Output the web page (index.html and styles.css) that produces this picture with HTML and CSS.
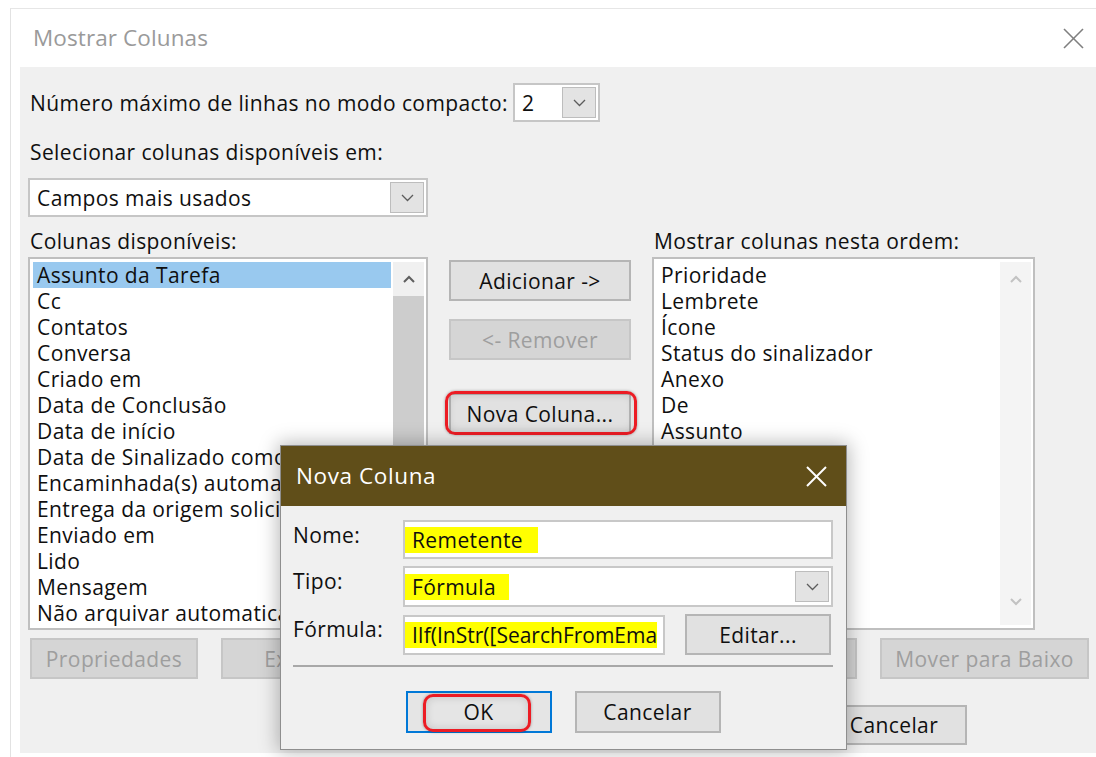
FILE: index.html
```html
<!DOCTYPE html>
<html lang="pt-BR">
<head>
<meta charset="utf-8">
<title>Mostrar Colunas</title>
<link rel="stylesheet" href="styles.css">
</head>
<body>
<div class="window">
  <header class="titlebar">
    <span class="title">Mostrar Colunas</span>
    <svg class="close-icon" width="21" height="21" viewBox="0 0 21 21" aria-hidden="true">
      <line x1="1" y1="1" x2="20" y2="20"/><line x1="20" y1="1" x2="1" y2="20"/>
    </svg>
  </header>

  <main class="panel">
    <div class="row-compact">
      <span class="text">Número máximo de linhas no modo compacto:</span>
      <div class="combo combo-small">
        <span class="combo-value">2</span>
        <span class="drop"><svg width="13" height="8" viewBox="0 0 13 8"><polyline points="1,1 6.5,6.5 12,1"/></svg></span>
      </div>
    </div>

    <div class="text label-select">Selecionar colunas disponíveis em:</div>
    <div class="combo combo-wide">
      <span class="combo-value">Campos mais usados</span>
      <span class="drop"><svg width="13" height="8" viewBox="0 0 13 8"><polyline points="1,1 6.5,6.5 12,1"/></svg></span>
    </div>

    <div class="columns">
      <section class="col">
        <div class="text col-label">Colunas disponíveis:</div>
        <div class="listbox">
          <ul class="items">
            <li class="selected">Assunto da Tarefa</li>
            <li>Cc</li>
            <li>Contatos</li>
            <li>Conversa</li>
            <li>Criado em</li>
            <li>Data de Conclusão</li>
            <li>Data de início</li>
            <li>Data de Sinalizado como</li>
            <li>Encaminhada(s) automaticamente</li>
            <li>Entrega da origem solicitada</li>
            <li>Enviado em</li>
            <li>Lido</li>
            <li>Mensagem</li>
            <li>Não arquivar automaticamente</li>
          </ul>
          <div class="scrollbar">
            <span class="arrow dark"><svg width="12" height="8" viewBox="0 0 12 8"><polyline points="1,7 6,2 11,7"/></svg></span>
            <span class="thumb"></span>
          </div>
        </div>
      </section>

      <section class="col-mid">
        <button class="btn">Adicionar -&gt;</button>
        <button class="btn disabled btn-remove">&lt;- Remover</button>
        <div class="marked btn-new-wrap">
          <button class="btn">Nova Coluna...</button>
          <span class="ring ring-new"></span>
        </div>
      </section>

      <section class="col">
        <div class="text col-label">Mostrar colunas nesta ordem:</div>
        <div class="listbox listbox-right">
          <ul class="items">
            <li>Prioridade</li>
            <li>Lembrete</li>
            <li>Ícone</li>
            <li>Status do sinalizador</li>
            <li>Anexo</li>
            <li>De</li>
            <li>Assunto</li>
            <li>Recebido</li>
            <li>Tamanho</li>
            <li>Categorias</li>
            <li>Menções</li>
          </ul>
          <div class="scrollbar scrollbar-idle">
            <span class="arrow"><svg width="12" height="8" viewBox="0 0 12 8"><polyline points="1,7 6,2 11,7"/></svg></span>
            <span class="arrow"><svg width="12" height="8" viewBox="0 0 12 8"><polyline points="1,1 6,6 11,1"/></svg></span>
          </div>
        </div>
      </section>
    </div>

    <div class="row-actions">
      <button class="btn disabled btn-props">Propriedades</button>
      <button class="btn disabled btn-delete">Excluir</button>
      <button class="btn disabled btn-up">Mover para Cima</button>
      <button class="btn disabled btn-down">Mover para Baixo</button>
    </div>

    <div class="row-footer">
      <button class="btn btn-footer">OK</button>
      <button class="btn btn-footer">Cancelar</button>
    </div>
  </main>

  <div class="dialog">
    <div class="dialog-titlebar">
      <span>Nova Coluna</span>
      <svg class="dialog-close" width="21" height="21" viewBox="0 0 21 21" aria-hidden="true">
        <line x1="1" y1="1" x2="20" y2="20"/><line x1="20" y1="1" x2="1" y2="20"/>
      </svg>
    </div>
    <div class="dialog-body">
      <div class="field">
        <span class="field-label">Nome:</span>
        <div class="input input-name"><span class="hl hl-name">Remetente</span></div>
      </div>
      <div class="field">
        <span class="field-label">Tipo:</span>
        <div class="input input-type">
          <span class="hl hl-type">Fórmula</span>
          <span class="drop"><svg width="13" height="8" viewBox="0 0 13 8"><polyline points="1,1 6.5,6.5 12,1"/></svg></span>
        </div>
      </div>
      <div class="field field-formula">
        <span class="field-label">Fórmula:</span>
        <div class="input input-formula"><span class="hl hl-formula">IIf(InStr([SearchFromEma</span></div>
        <button class="btn btn-edit">Editar...</button>
      </div>
      <div class="separator"></div>
      <div class="dialog-buttons">
        <div class="marked">
          <button class="btn btn-dialog btn-default">OK</button>
          <span class="ring ring-ok"></span>
        </div>
        <button class="btn btn-dialog">Cancelar</button>
      </div>
    </div>
  </div>
</div>
</body>
</html>
```

FILE: styles.css
```css
* { box-sizing: border-box; }

html, body {
  margin: 0;
  padding: 0;
  background: #ffffff;
}

body {
  width: 1096px;
  height: 757px;
  overflow: hidden;
  font-family: "Open Sans", "Noto Sans", "Liberation Sans", sans-serif;
  font-size: 21px;
  letter-spacing: 0.4px;
  color: #0f0f0f;
}

/* Outer window */
.window {
  position: relative;
  margin: 8px 0 0 10px;
  height: 749px;
  border-top: 1px solid #e6e6e6;
  border-left: 1px solid #e2e2e2;
}

.titlebar {
  height: 58px;
  display: flex;
  align-items: center;
  justify-content: space-between;
  padding: 0 12px 0 22px;
}

.title {
  color: #9a9a9a;
  font-size: 22.5px;
  letter-spacing: 0.1px;
  line-height: 26px;
}

.close-icon line {
  stroke: #7f7f7f;
  stroke-width: 1.6;
}

.panel {
  margin-left: 9px;
  height: 686px;
  background: #f0f0f0;
  padding: 16px 0 0 8px;
}

.text {
  line-height: 26px;
  white-space: nowrap;
}

.row-compact {
  display: grid;
  grid-template-columns: 485px 87px;
  align-items: center;
  height: 39px;
}

.row-compact .text { padding-left: 2px; }

/* Combo boxes */
.combo {
  display: flex;
  align-items: center;
  justify-content: space-between;
  background: #ffffff;
  border: 2px solid #c6c6c6;
  height: 39px;
}

.combo-value {
  line-height: 26px;
  padding-left: 7px;
}

.drop {
  display: flex;
  align-items: center;
  justify-content: center;
  width: 34px;
  height: 31px;
  margin-right: 2px;
  background: #e3e3e3;
  border: 1px solid #bdbdbd;
}

.drop polyline {
  fill: none;
  stroke: #5c5c5c;
  stroke-width: 1.3;
}

.label-select {
  margin-top: 17px;
  padding-left: 2px;
}

.combo-wide {
  width: 400px;
  margin-top: 13px;
}

/* Column area */
.columns {
  display: grid;
  grid-template-columns: 400px 182px 383px;
  column-gap: 21px;
  margin-top: 11px;
}

.col-label { padding-left: 2px; }

.listbox {
  margin-top: 3px;
  height: 373px;
  border: 2px solid #bfbfbf;
  background: #ffffff;
  padding: 3px 2px 3px 3px;
  display: flex;
  overflow: hidden;
}

.items {
  list-style: none;
  margin: 0 2px 0 0;
  padding: 0;
  flex: 1;
  min-width: 0;
}

.items li {
  height: 26px;
  line-height: 26px;
  padding-left: 4px;
  white-space: nowrap;
}

.items li.selected { background: #99c9ef; }

.scrollbar {
  width: 31px;
  flex-shrink: 0;
  position: relative;
  display: flex;
  flex-direction: column;
  background: #f0f0f0;
}

.arrow {
  height: 34px;
  display: flex;
  align-items: center;
  justify-content: center;
  flex-shrink: 0;
}

.arrow polyline {
  fill: none;
  stroke: #c2c2c2;
  stroke-width: 2;
}

.arrow.dark polyline { stroke: #5f5f5f; }

.thumb {
  height: 220px;
  background: #cdcdcd;
}

.scrollbar-idle {
  justify-content: space-between;
  background: #f4f4f4;
  padding-bottom: 6px;
}

/* Middle buttons */
.col-mid {
  display: flex;
  flex-direction: column;
  padding-top: 32px;
}

.btn {
  font: inherit;
  letter-spacing: inherit;
  color: #0f0f0f;
  height: 41px;
  line-height: 26px;
  padding: 0;
  background: #e1e1e1;
  border: 2px solid #b5b5b5;
  white-space: nowrap;
}

.btn.disabled {
  background: #d5d5d5;
  border-color: #c6c6c6;
  color: #9e9e9e;
}

.col-mid .btn { width: 182px; }

.btn-remove { margin-top: 18px; }

.marked { position: relative; }

.btn-new-wrap { margin-top: 33px; }

/* Red annotation rings drawn on top of buttons */
.ring {
  position: absolute;
  border: 3px solid #ec1c24;
  border-radius: 10px;
  box-shadow: 0 0 3px rgba(0, 0, 0, 0.35), inset 0 0 8px rgba(0, 0, 0, 0.15);
  pointer-events: none;
}

.ring-new { left: -4px; right: -6px; top: -2px; bottom: -1px; }

/* Bottom rows */
.row-actions {
  display: flex;
  margin-top: 8px;
  padding-left: 2px;
}

.btn-props { width: 168px; }
.btn-delete { width: 154px; margin-left: 23px; }
.btn-up, .btn-down { width: 209px; }
.btn-up { margin-left: 273px; }
.btn-down { margin-left: 23px; }

.row-footer {
  display: flex;
  justify-content: flex-end;
  gap: 15px;
  margin-top: 26px;
  padding-right: 129px;
}

.btn-footer {
  width: 146px;
  height: 40px;
}

/* "Nova Coluna" dialog floating above the window */
.dialog {
  position: absolute;
  left: 269px;
  top: 436px;
  width: 567px;
  height: 305px;
  background: #f0f0f0;
  border: 1px solid #8e8e8e;
  box-shadow: 0 0 18px 2px rgba(0, 0, 0, 0.28);
  display: flex;
  flex-direction: column;
}

.dialog-titlebar {
  height: 60px;
  flex-shrink: 0;
  background: #604e19;
  color: #ffffff;
  display: flex;
  align-items: center;
  justify-content: space-between;
  padding: 0 19px 0 15px;
  font-size: 22.5px;
  letter-spacing: 0.6px;
  line-height: 26px;
}

.dialog-close line {
  stroke: #ffffff;
  stroke-width: 2;
}

.dialog-body {
  padding: 14px 13px 0 12px;
  display: flex;
  flex-direction: column;
}

.field {
  display: flex;
  align-items: flex-start;
}

.field + .field { margin-top: 7px; }

.field-label {
  width: 110px;
  flex-shrink: 0;
  line-height: 26px;
  padding-top: 2px;
}

.input {
  background: #ffffff;
  border: 2px solid #c8c8c8;
  display: flex;
  align-items: center;
  justify-content: space-between;
  overflow: hidden;
}

.input-name { flex: 1; height: 39px; }
.input-type { flex: 1; height: 41px; }
.input-formula { width: 262px; height: 40px; }

.hl {
  display: inline-block;
  background: #ffff00;
  height: 26px;
  line-height: 26px;
  white-space: nowrap;
}

.hl-name { padding: 0 15px 0 7px; }
.hl-type { padding: 0 13px 0 7px; }

.hl-formula {
  padding-left: 7px;
  letter-spacing: 0;
}

.field-formula { align-items: center; }
.field-formula .field-label { align-self: flex-start; }

.btn-edit {
  width: 146px;
  margin-left: 20px;
}

.separator {
  margin-top: 10px;
  border-top: 2px solid #a8a8a8;
}

.dialog-buttons {
  display: flex;
  justify-content: center;
  gap: 23px;
  margin-top: 24px;
}

.btn-dialog {
  width: 146px;
  height: 42px;
}

.btn-default {
  border-color: #0078d7;
  background: #e5e5e5;
}

.ring-ok { left: 17px; right: 21px; top: 3px; bottom: 1px; }
```
